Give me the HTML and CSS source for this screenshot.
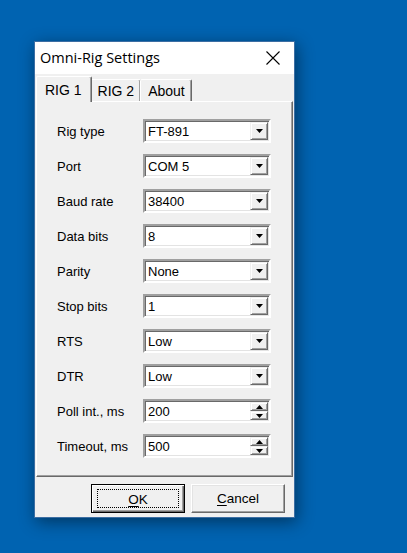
FILE: index.html
```html
<!DOCTYPE html>
<html lang="en">
<head>
  <meta charset="UTF-8" />
  <title>Omni-Rig Settings</title>
  <link rel="stylesheet" href="styles.css">
</head>
<body>

  <div class="dialog">
    <div class="titlebar">
      <span class="title">Omni-Rig Settings</span>
      <svg class="close" width="14" height="14" viewBox="0 0 14 14">
        <path d="M0.5 0.5 L13.5 13.5 M13.5 0.5 L0.5 13.5" stroke="#000" stroke-width="1.1" fill="none" />
      </svg>
    </div>

    <div class="client">
      <div class="tabs">
        <div class="tab active">RIG 1</div>
        <div class="tab">RIG 2</div>
        <div class="tab">About</div>
      </div>

      <div class="panel" id="panel"></div>

      <div class="buttons">
        <button class="btn default"><span class="focus"><u>O</u>K</span></button>
        <button class="btn"><span class="focus-none"><u>C</u>ancel</span></button>
      </div>
    </div>
  </div>

  <script>
    const rows = [
      { label: 'Rig type', value: 'FT-891', kind: 'combo' },
      { label: 'Port', value: 'COM 5', kind: 'combo' },
      { label: 'Baud rate', value: '38400', kind: 'combo' },
      { label: 'Data bits', value: '8', kind: 'combo' },
      { label: 'Parity', value: 'None', kind: 'combo' },
      { label: 'Stop bits', value: '1', kind: 'combo' },
      { label: 'RTS', value: 'Low', kind: 'combo' },
      { label: 'DTR', value: 'Low', kind: 'combo' },
      { label: 'Poll int., ms', value: '200', kind: 'spin' },
      { label: 'Timeout, ms', value: '500', kind: 'spin' }
    ];

    const arrowDown = '<svg width="7" height="4" viewBox="0 0 7 4"><path d="M0 0 H7 L3.5 4 Z" fill="#000"/></svg>';
    const arrowUp = '<svg width="7" height="4" viewBox="0 0 7 4"><path d="M0 4 H7 L3.5 0 Z" fill="#000"/></svg>';

    const panel = document.getElementById('panel');
    rows.forEach(row => {
      const div = document.createElement('div');
      div.className = 'row';
      let side;
      if (row.kind === 'combo') {
        side = `<span class="drop">${arrowDown}</span>`;
      } else {
        side = `<span class="spin"><span class="half">${arrowUp}</span><span class="half">${arrowDown}</span></span>`;
      }
      div.innerHTML = `
        <span class="label">${row.label}</span>
        <div class="field">
          <span class="value">${row.value}</span>
          ${side}
        </div>
      `;
      panel.appendChild(div);
    });
  </script>
</body>
</html>
```

FILE: styles.css
```css
body {
  margin: 0;
  padding: 41px 0 0 34px;
  background: #0063b1;
  font-family: "Liberation Sans", Arial, sans-serif;
  font-size: 13px;
  color: #000;
  height: 553px;
  box-sizing: border-box;
  overflow: hidden;
}

.dialog {
  width: 261px;
  height: 477px;
  box-sizing: border-box;
  border: 1px solid #3c6ea3;
  background: #f0f0f0;
  box-shadow: 2px 4px 16px rgba(0, 0, 0, 0.45);
  display: flex;
  flex-direction: column;
}

/* Title bar */
.titlebar {
  height: 32px;
  background: #fff;
  display: flex;
  align-items: center;
  justify-content: space-between;
  padding: 0 14px 0 5px;
  flex-shrink: 0;
}

.title {
  font-family: "Open Sans", "Noto Sans", sans-serif;
  font-size: 14.5px;
  color: #000;
  margin-top: -2px;
}

.close {
  display: block;
}

/* Client area */
.client {
  flex: 1;
  display: flex;
  flex-direction: column;
  padding: 0 1px 0 1px;
}

.tabs {
  display: flex;
  align-items: flex-end;
  height: 27px;
  padding-left: 1px;
  position: relative;
  z-index: 1;
}

.tab {
  height: 21px;
  padding: 0 6px 0 7px;
  line-height: 23px;
  font-size: 14px;
  border: 1px solid;
  border-color: #fff #696969 transparent #fff;
  box-shadow: inset -1px 0 0 #a0a0a0;
  border-bottom: none;
  border-radius: 2px 2px 0 0;
  background: #f0f0f0;
}

.tab + .tab {
  margin-left: -1px;
}

.tab.active {
  height: 25px;
  padding: 0 9px 0 8px;
  line-height: 27px;
  margin-bottom: -1px;
  margin-left: -1px;
  position: relative;
  z-index: 2;
}

.tab.active + .tab {
  margin-left: -2px;
}

.panel {
  height: 376px;
  box-sizing: border-box;
  border: 1px solid;
  border-color: #fff #696969 #696969 #fff;
  box-shadow: inset -1px -1px 0 #a0a0a0;
  padding: 17px 0 0 20px;
  display: flex;
  flex-direction: column;
  gap: 11px;
}

.row {
  display: flex;
  align-items: center;
  height: 24px;
}

.label {
  width: 86px;
}

.field {
  width: 128px;
  height: 24px;
  box-sizing: border-box;
  border: 2px solid;
  border-color: #a0a0a0 #fff #fff #a0a0a0;
  box-shadow: inset 1px 1px 0 #696969, inset -1px -1px 0 #e3e3e3;
  background: #fff;
  display: flex;
  align-items: stretch;
  padding: 1px 1px 1px 1px;
}

.value {
  flex: 1;
  padding-left: 2px;
  line-height: 19px;
  font-size: 13px;
}

.drop {
  width: 18px;
  box-sizing: border-box;
  background: #f0f0f0;
  border: 1px solid;
  border-color: #f0f0f0 #696969 #696969 #f0f0f0;
  box-shadow: inset 1px 1px 0 #fff, inset -1px -1px 0 #a0a0a0;
  display: flex;
  align-items: center;
  justify-content: center;
}

.spin {
  width: 18px;
  display: flex;
  flex-direction: column;
}

.half {
  flex: 1;
  box-sizing: border-box;
  background: #f0f0f0;
  border: 1px solid;
  border-color: #f0f0f0 #696969 #696969 #f0f0f0;
  box-shadow: inset 1px 1px 0 #fff, inset -1px -1px 0 #a0a0a0;
  display: flex;
  align-items: center;
  justify-content: center;
}

.half svg {
  display: block;
}

/* Buttons */
.buttons {
  display: flex;
  justify-content: flex-end;
  gap: 6px;
  padding: 7px 8px 0 0;
}

.btn {
  width: 94px;
  height: 29px;
  padding: 0;
  font-family: "Liberation Sans", Arial, sans-serif;
  font-size: 13.5px;
  background: #f0f0f0;
  border: 1px solid;
  border-color: #fff #696969 #696969 #fff;
  box-shadow: inset -1px -1px 0 #a0a0a0, inset 1px 1px 0 #e3e3e3;
  display: flex;
  align-items: center;
  justify-content: center;
}

.btn.default {
  border: 1px solid #000;
  box-shadow: inset 1px 1px 0 #fff, inset -1px -1px 0 #696969, inset -2px -2px 0 #a0a0a0;
}

.btn .focus {
  width: 82px;
  height: 19px;
  line-height: 19px;
  border: 1px dotted #000;
  box-sizing: border-box;
}

.btn u {
  text-decoration-thickness: 1px;
  text-underline-offset: 2px;
}
```
